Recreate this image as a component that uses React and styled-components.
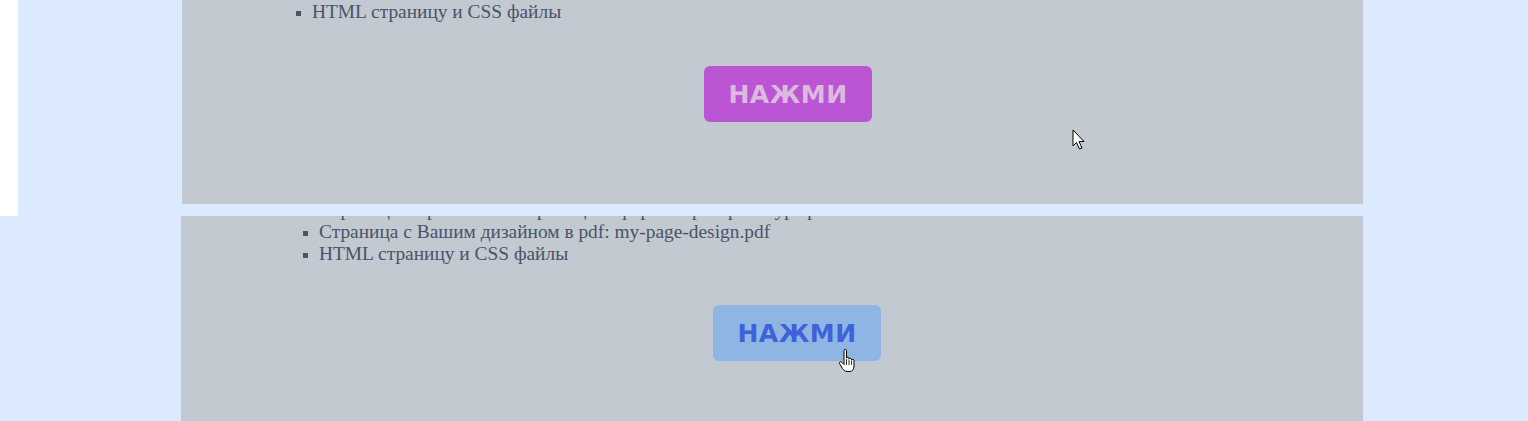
import React from 'react'
import styled, { createGlobalStyle } from 'styled-components'

const GlobalStyle = createGlobalStyle`
    html, body {
        margin: 0;
        padding: 0;
        background: #dbeafe;
        overflow: hidden;
    }
`

const Page = styled.div`
    position: relative;
    width: 1528px;
    height: 421px;
    display: flex;
    flex-direction: column;
    background: #dbeafe;
`

const Frame = styled.div`
    display: flex;
    height: ${props => props.height}px;
    background: #dbeafe;
`

const Strip = styled.div`
    width: 18px;
    background: #ffffff;
`

const Panel = styled.div`
    margin-left: ${props => props.left}px;
    width: ${props => props.width}px;
    height: ${props => props.height}px;
    background: #c2c9d0;
    overflow: hidden;
    display: flex;
    flex-direction: column;
`

const List = styled.ul`
    margin: ${props => props.top}px 0 0;
    padding-left: ${props => props.indent}px;
    list-style: square;
    font-family: "Liberation Serif", "DejaVu Serif", serif;
    font-size: 19.4px;
    line-height: 22px;
    color: #4a5468;
    li::marker {
        font-size: 16px;
    }
`

const ButtonRow = styled.div`
    display: flex;
    justify-content: center;
    padding-left: ${props => props.shift}px;
    margin-top: ${props => props.gap}px;
`

const Button = styled.button`
    width: 168px;
    height: 56px;
    border: none;
    border-radius: 6px;
    background: ${props => props.hover ? '#8fb6e3' : '#bb55d4'};
    color: ${props => props.hover ? '#3d62dc' : '#dcb9df'};
    font-family: "DejaVu Sans", Verdana, sans-serif;
    font-weight: bold;
    font-size: 25px;
    letter-spacing: 0.5px;
    padding: 0;
    cursor: pointer;
`

const Cursor = styled.svg`
    position: absolute;
    left: ${props => props.x}px;
    top: ${props => props.y}px;
    pointer-events: none;
`

const items = [
    'Страница с прототипом страницы в формате pdf: prototype.pdf',
    'Страница с Вашим дизайном в pdf: my-page-design.pdf',
    'HTML страницу и CSS файлы',
]

const Arrow = ({ x, y }) => (
    <Cursor x={x} y={y} width="14" height="22" viewBox="0 0 14 22">
        <path d="M1 1 L1 17 L4.5 13.5 L7.5 20 L10 19 L7 12.5 L12 12.5 Z" fill="#fff" stroke="#000" strokeWidth="1" strokeLinejoin="round" />
    </Cursor>
)

const Hand = ({ x, y }) => (
    <Cursor x={x} y={y} width="20" height="26" viewBox="0 0 20 26">
        <path d="M6 2.5 C6 1 8.5 1 8.5 2.5 L8.5 10 C8.5 9 11 9 11 10.5 L11 11 C11 10 13.5 10 13.5 11.5 L13.5 12 C13.5 11 16 11 16 12.5 L16 18 C16 21 14.5 23.5 12 23.5 L9 23.5 C7 23.5 5.5 22 4.5 20.5 L1.5 15.5 C0.8 14.3 2.5 13 3.7 14.2 L6 16.5 Z" fill="#fff" stroke="#000" strokeWidth="1" strokeLinejoin="round" />
        <path d="M8.5 11 L8.5 17 M11 11.5 L11 17 M13.5 12.5 L13.5 17" stroke="#000" strokeWidth="0.8" />
    </Cursor>
)

const App = () => {
    return (
        <Page>
            <GlobalStyle />
            <Frame height={216}>
                <Strip />
                <Panel left={164} width={1181} height={204}>
                    <List top={-21} indent={130}>
                        {[items[0], items[2]].map((t, i) => <li key={i}>{t}</li>)}
                    </List>
                    <ButtonRow shift={31} gap={43}>
                        <Button>НАЖМИ</Button>
                    </ButtonRow>
                </Panel>
            </Frame>
            <Frame height={205}>
                <Panel left={181} width={1182} height={205}>
                    <List top={-17} indent={138}>
                        {items.map((t, i) => <li key={i}>{t}</li>)}
                    </List>
                    <ButtonRow shift={50} gap={40}>
                        <Button hover>НАЖМИ</Button>
                    </ButtonRow>
                </Panel>
            </Frame>
            <Arrow x={1072} y={129} />
            <Hand x={838} y={348} />
        </Page>
    )
}

export default App
